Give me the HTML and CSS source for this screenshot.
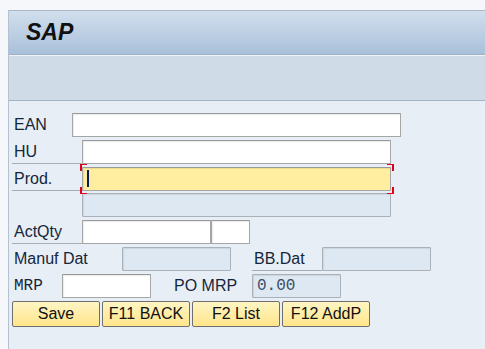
FILE: index.html
```html
<!DOCTYPE html>
<html lang="en">
<head>
    <meta charset="UTF-8">
    <meta name="viewport" content="width=device-width, initial-scale=1.0">
    <title>SAP</title>
    <link rel="stylesheet" href="styles.css">
</head>
<body>
    <div class="window">
        <div class="title-bar">
            <h1>SAP</h1>
        </div>
        <div class="toolbar"></div>

        <div class="content">
            <div class="row">
                <label class="lbl w60">EAN</label>
                <input class="field w329" type="text">
            </div>
            <div class="row">
                <label class="lbl w70 line">HU</label>
                <input class="field w309" type="text">
            </div>
            <div class="row">
                <label class="lbl w70 line">Prod.</label>
                <div class="focus-wrap">
                    <input class="field w309 active" type="text">
                    <span class="caret"></span>
                    <span class="frame"></span>
                </div>
            </div>
            <div class="row row-tight">
                <span class="lbl w70"></span>
                <input class="field w309 disabled" type="text" disabled>
            </div>
            <div class="row">
                <label class="lbl w70 line">ActQty</label>
                <input class="field w129" type="text">
                <input class="field w39 ml1" type="text">
            </div>
            <div class="row">
                <label class="lbl w110">Manuf Dat</label>
                <input class="field w109 disabled" type="text" disabled>
                <label class="lbl w70 line ml21">BB.Dat</label>
                <input class="field w109 disabled" type="text" disabled>
            </div>
            <div class="row">
                <label class="lbl w50 mono">MRP</label>
                <input class="field w89" type="text">
                <label class="lbl w101 pl23">PO MRP</label>
                <input class="field w89 disabled mono-val" type="text" value="0.00" disabled>
            </div>
            <div class="buttons">
                <button class="btn">Save</button>
                <button class="btn">F11 BACK</button>
                <button class="btn">F2 List</button>
                <button class="btn">F12 AddP</button>
            </div>
        </div>
    </div>
</body>
</html>
```

FILE: styles.css
```css
/* General Styling */
body {
    margin: 0;
    padding: 0;
    background-color: #f5f7fa;
    font-family: 'Liberation Sans', Arial, sans-serif;
    overflow: hidden;
}

.window {
    margin: 10px 0 0 8px;
    height: 339px;
    border-left: 1px solid #b3c1d1;
    background-color: #e8eef6;
}

/* Title bar */
.title-bar {
    height: 43px;
    border-top: 1px solid #a9b8ca;
    border-bottom: 1px solid #9fb2c8;
    background: linear-gradient(#d2dfed, #a9c0da);
    display: flex;
    align-items: center;
}

.title-bar h1 {
    margin: 0 0 0 17px;
    font-size: 23px;
    font-weight: bold;
    font-style: italic;
    color: #111111;
}

.toolbar {
    height: 44px;
    border-top: 1px solid #f0f4f8;
    border-bottom: 1px solid #a3b3c5;
    background-color: #cfdce7;
}

/* Form */
.content {
    padding: 12px 0 0 3px;
    display: flex;
    flex-direction: column;
    gap: 3px;
}

.row {
    display: flex;
    align-items: center;
    height: 24px;
}

.row-tight {
    margin-top: -1px;
}

.lbl {
    box-sizing: border-box;
    height: 24px;
    padding-left: 2px;
    display: flex;
    align-items: center;
    font-size: 16px;
    color: #15263b;
    white-space: nowrap;
}

.lbl.line {
    border-bottom: 1px solid #a3adb9;
}

.mono {
    font-family: 'Liberation Mono', 'Courier New', monospace;
    font-size: 16px;
}

.w50 { width: 50px; }
.w60 { width: 60px; }
.w70 { width: 70px; }
.w101 { width: 101px; }
.w110 { width: 110px; }
.ml1 { margin-left: 1px; }
.ml21 { margin-left: 21px; }
.pl23 { padding-left: 23px; }

.field {
    box-sizing: border-box;
    height: 24px;
    margin: 0;
    padding: 0 4px;
    border: 1px solid #a6a6a6;
    border-top-color: #999999;
    border-radius: 1px;
    background-color: #ffffff;
    box-shadow: inset 1px 1px 1px rgba(0, 0, 0, 0.08);
    outline: none;
    font-size: 15px;
}

.field.w329 { width: 329px; }
.field.w309 { width: 309px; }
.field.w129 { width: 129px; }
.field.w109 { width: 109px; }
.field.w89 { width: 89px; }
.field.w39 { width: 39px; }

.field.disabled {
    background-color: #dde8f2;
    border-color: #aab0b7;
}

.field.active {
    background-color: #ffee9f;
}

.mono-val {
    font-family: 'Liberation Mono', 'Courier New', monospace;
    font-size: 16px;
    color: #3c4f66;
}

/* Focus corners around the active field */
.focus-wrap {
    position: relative;
    display: flex;
}

.frame {
    position: absolute;
    top: -3px;
    bottom: -3px;
    left: -2px;
    right: -3px;
    pointer-events: none;
    background:
        linear-gradient(#e3001b, #e3001b) left top / 7px 1px no-repeat,
        linear-gradient(#e3001b, #e3001b) left top / 2px 7px no-repeat,
        linear-gradient(#e3001b, #e3001b) left bottom / 7px 1px no-repeat,
        linear-gradient(#e3001b, #e3001b) left bottom / 2px 7px no-repeat,
        linear-gradient(#e3001b, #e3001b) right top / 7px 1px no-repeat,
        linear-gradient(#e3001b, #e3001b) right top / 2px 7px no-repeat,
        linear-gradient(#e3001b, #e3001b) right bottom / 7px 1px no-repeat,
        linear-gradient(#e3001b, #e3001b) right bottom / 2px 7px no-repeat;
}

.caret {
    position: absolute;
    left: 5px;
    top: 3px;
    width: 2px;
    height: 17px;
    background-color: #0b1a5a;
}

/* Buttons */
.buttons {
    display: flex;
    gap: 2px;
}

.btn {
    width: 88px;
    height: 26px;
    padding: 0;
    border: 1px solid #6f6f6f;
    border-radius: 2px;
    background: linear-gradient(#fff5c4, #ffe58a);
    font-family: 'Liberation Sans', Arial, sans-serif;
    font-size: 16px;
    color: #111111;
    cursor: pointer;
}
```
